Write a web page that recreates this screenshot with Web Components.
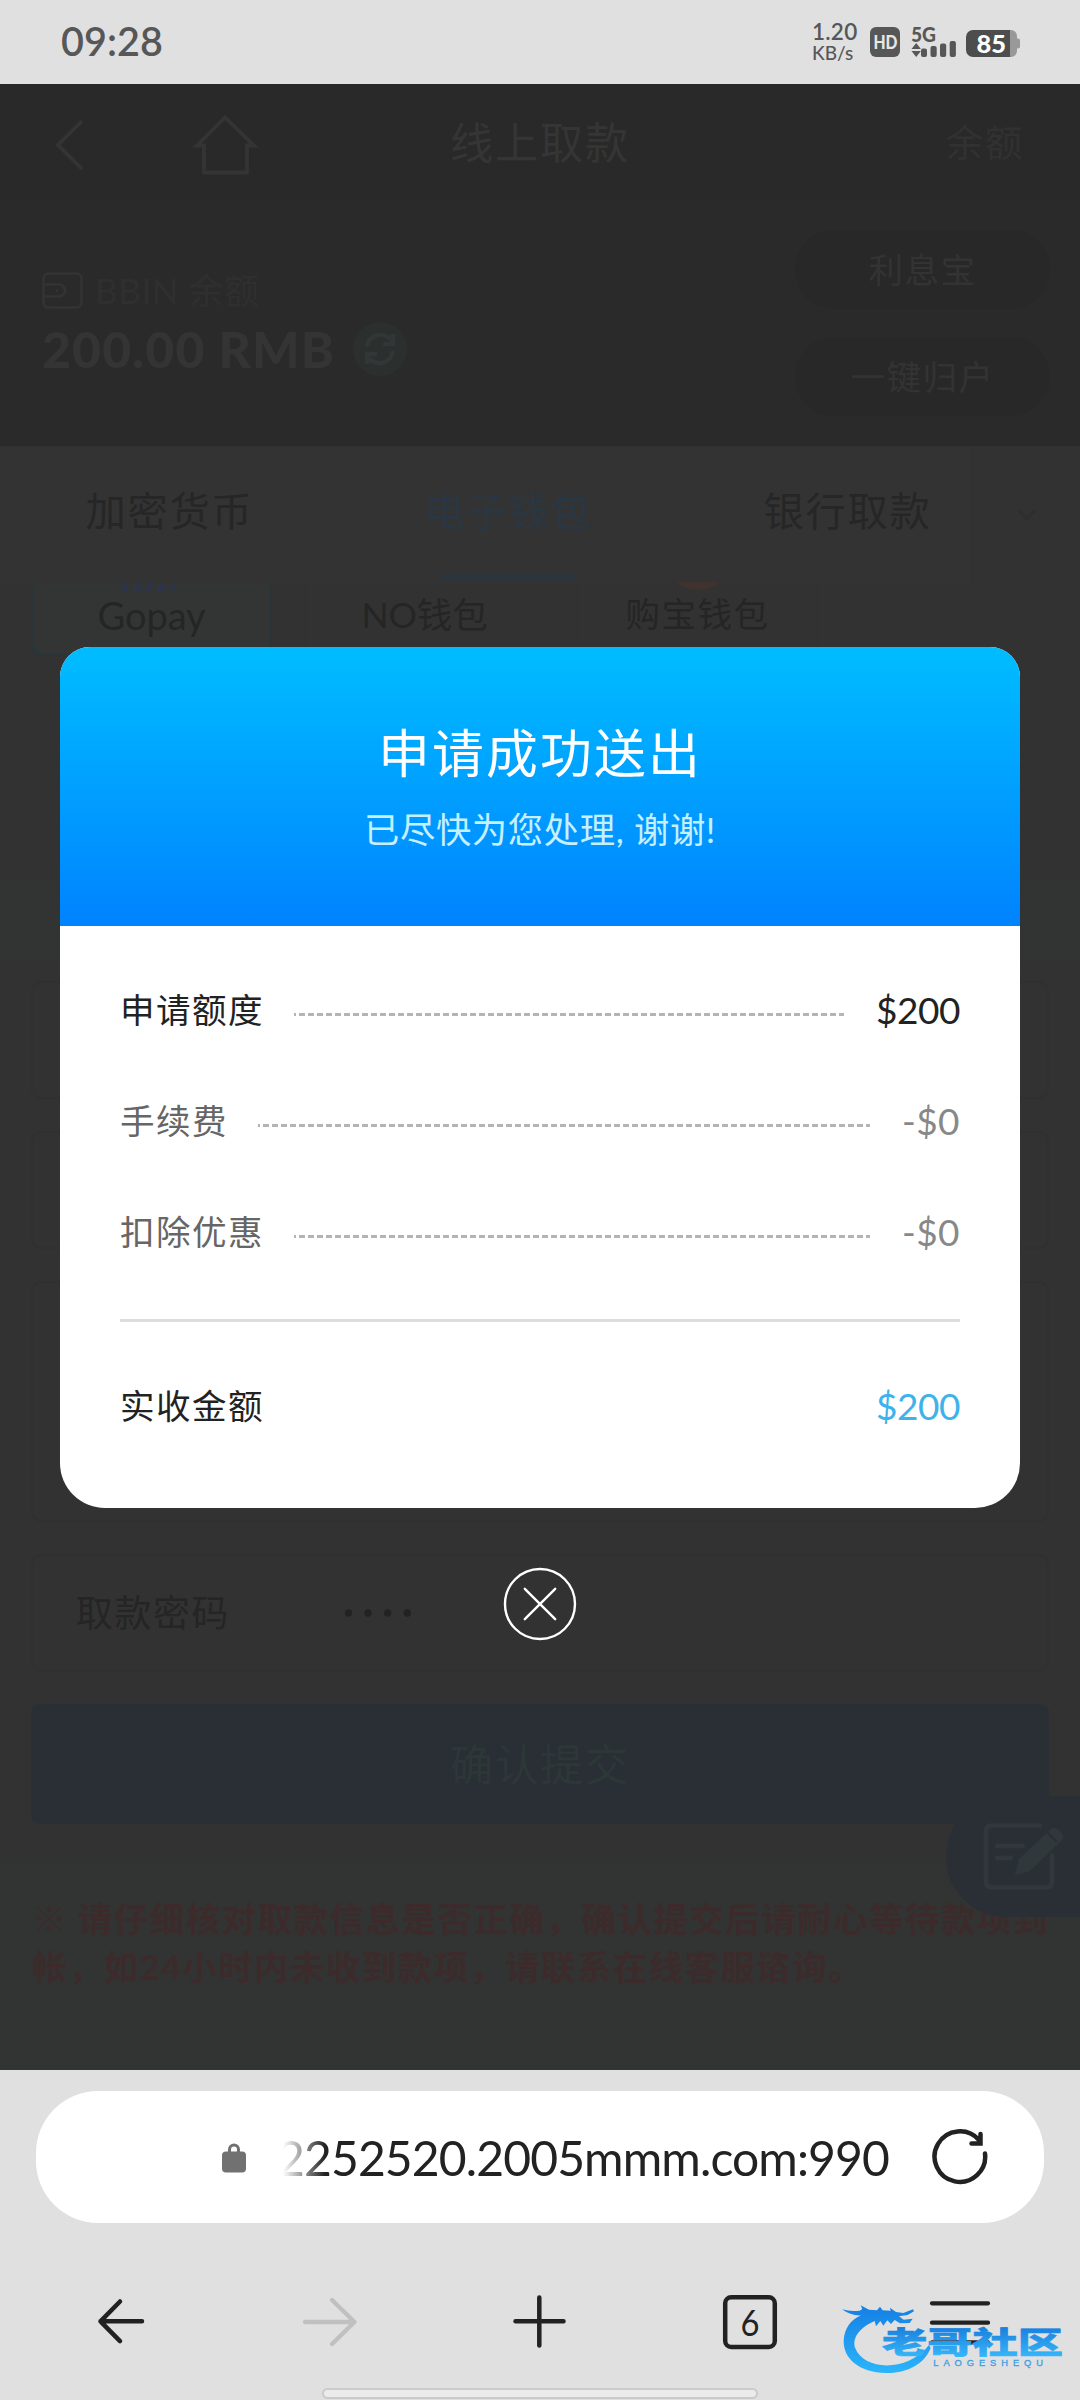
<!DOCTYPE html>
<html lang="zh-CN">
<head>
<meta charset="utf-8">
<title>线上取款</title>
<style>
html,body{margin:0;padding:0;background:#e0e0e0}
body{width:1080px;height:2400px;overflow:hidden;font-family:Lato,"Noto Sans CJK SC",sans-serif;line-height:1}
</style>
</head>
<body>
<phone-screen></phone-screen>
<script>
const define = (name, html, init) => customElements.define(name, class extends HTMLElement {
  constructor() { super(); this.attachShadow({mode: 'open'}).innerHTML = html; }
  connectedCallback() { if (init) init(this, this.shadowRoot); }
});

define('phone-screen', `
<style>
:host{display:flex;flex-direction:column;width:1080px;height:2400px;background:#e0e0e0}
.view{display:grid;height:1986px;flex:none;overflow:hidden}
.view>*{grid-area:1/1}
</style>
<status-bar></status-bar>
<div class="view"><withdraw-page></withdraw-page><result-overlay></result-overlay></div>
<browser-bar></browser-bar>
`);

define('status-bar', `
<style>
:host{display:flex;height:84px;flex:none;box-sizing:border-box;padding:0 60px 0 61px;justify-content:space-between;color:#575757;background:#e0e0e0}
.time{padding-top:21px}
.right{display:flex;align-items:flex-start}
.speed{display:flex;flex-direction:column;width:44px;padding-top:20px;margin-right:14px}
svg{display:block}
</style>
<div class="time"><ui-text size="39.5" w="102" weight="600">09:28</ui-text></div>
<div class="right">
  <div class="speed"><ui-text size="22.5" lh="23" w="45" weight="600">1.20</ui-text><ui-text size="19" w="44" lh="19" weight="500">KB/s</ui-text></div>
  <svg width="150" height="84" viewBox="870 0 150 84" font-family="Lato" font-weight="900">
    <rect x="870" y="27" width="30" height="30" rx="6" fill="#575757"/>
    <text x="873.4" y="49" font-size="18.5" textLength="24" lengthAdjust="spacingAndGlyphs" fill="#e6e6e6">HD</text>
    <text x="911" y="42" font-size="20" textLength="25" lengthAdjust="spacingAndGlyphs" fill="#575757">5G</text>
    <path d="M911.5 49l4.7-6 4.7 6zM911.5 51h9.400l-4.700 6z" fill="#575757"/>
    <g fill="#575757"><rect x="921" y="48.500" width="6" height="8.500" rx="2"/><rect x="930.500" y="46" width="6.200" height="11" rx="2"/><rect x="940" y="43.500" width="6.200" height="13.500" rx="2"/><rect x="949.700" y="41" width="6.200" height="16" rx="2"/></g>
    <path d="M1010 30h1a6 6 0 0 1 6 6v2.500h1q2 0 2 2v6q0 2-2 2h-1v2.500a6 6 0 0 1-6 6h-1z" fill="#999"/>
    <path d="M973 30h37v27h-37a7 7 0 0 1-7-7v-13a7 7 0 0 1 7-7z" fill="#4d4d4d"/>
    <text x="976.500" y="52.700" font-size="24.500" textLength="29.500" lengthAdjust="spacingAndGlyphs" fill="#fff">85</text>
  </svg>
</div>
`);

define('withdraw-page', `
<style>
:host{display:flex;flex-direction:column;height:1986px;background:#323232;position:relative;overflow:hidden}
svg{display:block;flex:none}
nav{display:grid;grid-template-columns:270px 540px 270px;height:116px;background:#292929;color:#353535}
nav>*{align-self:center}
.title{text-align:center}
.bal{text-align:right;padding-right:56px;box-sizing:border-box;color:#313131}
.balance{display:flex;justify-content:space-between;height:246px;background:#2a2a2a;border-bottom:1px solid #313131}
.left{padding:70px 0 0 42px}
.l1{display:flex;align-items:center;gap:12px;height:40px;color:#2f2f2f}
.l2{display:flex;align-items:center;gap:18px;height:54px;margin-top:12px;color:#343434}
.pills{display:flex;flex-direction:column;gap:28px;padding:30px 30px 0 0}
.pill{width:255px;height:79px;border-radius:40px;background:#282828;display:flex;align-items:center;justify-content:center;color:#333}
.tabs{display:flex;height:136px;flex:none;overflow:hidden;background:#333}
.tab{width:339px;flex:none;display:grid;grid-template-rows:127px 6px;justify-items:center;align-items:center;color:#262626}
.tab.on{color:#2a3742}.tab.on i{width:134px;height:6px;background:#2a353d}
.third{width:293px;overflow:visible}
.third ui-text{margin-left:46px}
.more{width:109px;flex:none;background:#323232;border-left:1px solid #303030;display:flex;align-items:center;justify-content:center}
.tiles{display:flex;gap:32px;padding:0 31px;height:292px;flex:none}
.tile{width:241px;height:73px;box-sizing:border-box;border:2px solid #313131;border-top:0;border-radius:0 0 10px 10px;display:flex;flex-direction:column;align-items:center;color:#252525}
.tile.on{border:3px solid #2a3539;border-top:0;background:#323533}
.logo{height:8px;display:flex;align-items:flex-end}
.logo ui-text{color:#2b3358}
.label{padding-top:5px}
.strip{height:90px;flex:none;background:linear-gradient(#323232,#313433 25px,#313433 60px,#323232)}
.form{display:flex;flex-direction:column;padding:16px 31px 0;gap:32px;height:890px;box-sizing:border-box}
.box{box-sizing:border-box;border:2px solid #303030;border-radius:10px;height:118px;flex:none;display:flex;align-items:center}
.big{height:241px}
.pw{height:118px;padding-left:43px;color:#252525}
.btn{height:120px;flex:none;border-radius:9px;background:#2a2e35;display:flex;align-items:center;justify-content:center;color:#2d3737}
.note{flex:1;background:linear-gradient(#323232,#313433 40px);padding:40px 0 0 32px;color:#3d2b2b}
.note div{height:48px;display:flex;align-items:center;white-space:pre}
.float{position:absolute;right:0;top:1712px;width:134px;height:121px;background:#2a2f36;border-radius:60px 0 0 60px}
</style>
<nav>
  <svg width="270" height="116" viewBox="0 84 270 116" fill="none" stroke="#343434" stroke-width="3.800"><path d="M82 121L58 145 82 169"/><path d="M197 145.500h7v27h43v-27h7L225 117.500z"/></svg>
  <div class="title"><ui-text size="45">线上取款</ui-text></div>
  <div class="bal"><ui-text size="39">余额</ui-text></div>
</nav>
<div class="balance">
  <div class="left">
    <div class="l1">
      <svg width="41" height="37" viewBox="0 0 41 37" fill="none" stroke="#333" stroke-width="2.700"><rect x="1.500" y="1.500" width="38" height="34" rx="5"/><path d="M1.500 12.500H17a6 6 0 0 1 0 12H1.500M14 18.500h2"/></svg>
      <ui-text size="36.5" w="165">BBIN 余额</ui-text>
    </div>
    <div class="l2"><ui-text size="50" w="293" weight="900">200.00 RMB</ui-text>
      <svg width="54" height="54" viewBox="0 0 54 54"><circle cx="27" cy="27" r="27" fill="#2b302f"/><g fill="none" stroke="#303736" stroke-width="4.500"><path d="M14 25a13.500 13.500 0 0 1 24-7M40 29a13.500 13.500 0 0 1-24 7"/><path d="M40 12v10H30M14 42V32h10"/></g></svg>
    </div>
  </div>
  <div class="pills"><div class="pill"><ui-text size="36">利息宝</ui-text></div><div class="pill"><ui-text size="36">一键归户</ui-text></div></div>
</div>
<div class="tabs">
  <div class="tab"><ui-text size="42">加密货币</ui-text></div>
  <div class="tab on"><ui-text size="42">电子钱包</ui-text><i></i></div>
  <div class="tab third"><ui-text size="42">银行取款</ui-text></div>
  <div class="more"><svg width="20" height="14" viewBox="0 0 22 14"><path d="M2 2l9 9 9-9" fill="none" stroke="#2e2e2e" stroke-width="3"/></svg></div>
</div>
<div class="tiles">
  <div class="tile on"><div class="logo"><ui-text size="10" w="60" lh="8" weight="900">GOPAY</ui-text></div><div class="label"><ui-text size="38" w="108">Gopay</ui-text></div></div>
  <div class="tile"><div class="logo"></div><div class="label"><ui-text size="37" w="126">NO钱包</ui-text></div></div>
  <div class="tile"><div class="logo"><svg width="44" height="9" viewBox="0 0 44 9"><path d="M0 0h44Q34 8 22 8T0 0z" fill="#40322c"/></svg></div><div class="label"><ui-text size="36">购宝钱包</ui-text></div></div>
</div>
<div class="strip"></div>
<div class="form">
  <div class="box"></div><div class="box"></div><div class="box big"></div>
  <div class="box pw"><ui-text size="38.500">取款密码</ui-text>
    <svg width="200" height="20" viewBox="0 0 200 20" fill="#222"><circle cx="118.500" cy="10" r="3.700"/><circle cx="138" cy="10" r="3.700"/><circle cx="157.700" cy="10" r="3.700"/><circle cx="177.300" cy="10" r="3.700"/></svg>
  </div>
  <div class="btn"><ui-text size="45">确认提交</ui-text></div>
</div>
<div class="note">
  <div><ui-text size="36" w="1017" weight="700">※ 请仔细核对取款信息是否正确，确认提交后请耐心等待款项到</ui-text></div>
  <div><ui-text size="36" w="832" weight="700">帐，如24小时内未收到款项，请联系在线客服谘询。</ui-text></div>
</div>
<div class="float"><svg width="134" height="121" viewBox="946 1796 134 121"><path d="M1040 1825.500H992q-6 0-6 6v50q0 6 6 6h54q6 0 6-6v-26M997 1846h26M997 1858h14" fill="none" stroke="#31383b" stroke-width="4.500" stroke-linecap="round"/><path d="M1015 1875l4-16 32-30q4-3 9 2t2 9l-32 31z" fill="#31383b"/><path d="M1047 1832l10 10" stroke="#2a2f36" stroke-width="2"/></svg></div>
`);

define('result-overlay', `
<style>
:host{display:flex;flex-direction:column;align-items:center;z-index:1;padding-top:563px;box-sizing:border-box}
.card{width:960px;height:861px;border-radius:30px 30px 45px 45px;overflow:hidden;background:#fff;display:flex;flex-direction:column}
header{height:279px;flex:none;box-sizing:border-box;padding-top:79px;display:flex;flex-direction:column;align-items:center;gap:32px;background:linear-gradient(#00bdff,#0083ff);color:#fff}
.sub{color:#c4f0ff}
.body{padding:28px 60px 0}
hr{border:0;height:3px;background:#ddd;margin:32px 0 28px}
.close{margin-top:59px;display:block}
</style>
<div class="card">
  <header><ui-text size="54">申请成功送出</ui-text><div class="sub"><ui-text size="36.8" w="352">已尽快为您处理, 谢谢!</ui-text></div></header>
  <div class="body">
    <fee-row amount="$200" w="84" style="color:#222;--v:#222">申请额度</fee-row>
    <fee-row amount="-$0" w="58" style="color:#666;--v:#888">手续费</fee-row>
    <fee-row amount="-$0" w="58" style="color:#666;--v:#888">扣除优惠</fee-row>
    <hr>
    <fee-row amount="$200" w="84" style="color:#222;--v:#3eb2eb;--line:hidden">实收金额</fee-row>
  </div>
</div>
<svg class="close" width="74" height="74" viewBox="0 0 74 74" fill="none" stroke="#fff" stroke-width="2.400"><circle cx="37" cy="37" r="35"/><path d="M21.800 21.800l30.400 30.400M52.200 21.800L21.800 52.200" stroke-linecap="round"/></svg>
`);

define('fee-row', `
<style>
:host{display:flex;height:111px;align-items:center}
.line{flex:1;height:3px;margin:9px 32px 0 30px;visibility:var(--line,visible);background:repeating-linear-gradient(90deg,#b4b4b4 0 6px,transparent 6px 9px) -4px 0/1200px 3px no-repeat}
.v{color:var(--v)}
</style>
<ui-text size="36"><slot></slot></ui-text><div class="line"></div><span class="v"></span>
`, (host, root) => {
  const t = document.createElement('ui-text');
  t.setAttribute('size', '37');
  t.setAttribute('w', host.getAttribute('w'));
  t.textContent = host.getAttribute('amount');
  root.querySelector('.v').replaceChildren(t);
});

define('browser-bar', `
<style>
:host{display:flex;flex-direction:column;height:330px;box-sizing:border-box;padding:21px 36px 0;position:relative;background:#e0e0e0;color:#222}
.addr{height:132px;flex:none;border-radius:62px;background:#fff;display:flex;align-items:center}
.lock{margin-left:186px}
.url{margin-left:30px;width:613px;height:60px;padding-top:2px;box-sizing:border-box;display:flex;justify-content:flex-end;align-items:center;-webkit-mask-image:linear-gradient(90deg,transparent 7px,#000 49px);mask-image:linear-gradient(90deg,transparent 7px,#000 49px)}
.reload{margin-left:41px}
.tools{display:flex;height:56px;margin-top:71px;padding-left:61px}
.tools>*{flex:none}
.fwd{margin-left:156px}.plus{margin-left:153px}.count{margin-left:154px}.menu{margin-left:151px}
.home{width:436px;height:11px;box-sizing:border-box;border:2px solid #cbcbcb;border-radius:6px;background:#ebebeb;margin:38px 0 0 286px}
svg{display:block}
.mark{position:absolute;left:820px;top:210px}
</style>
<div class="addr">
  <svg class="lock" width="24" height="31" viewBox="0 0 24 31"><path d="M7.500 13V7.500a4.500 4.500 0 0 1 9 0V13" fill="none" stroke="#717171" stroke-width="3"/><rect y="9.500" width="24" height="21" rx="4" fill="#717171"/></svg>
  <div class="url"><ui-text size="48" w="612">2252520.2005mmm.com:990</ui-text></div>
  <svg class="reload" width="60" height="60" viewBox="930 2127 60 60" fill="none" stroke="#222" stroke-width="4.500" stroke-linecap="round"><path d="M985 2153.500a25.300 25.300 0 1 1-6-13.500M980.500 2134v9.500H971.500"/></svg>
</div>
<div class="tools">
  <svg width="48" height="56" viewBox="97 2294 48 56" fill="none" stroke="#222" stroke-width="4.500" stroke-linecap="round" stroke-linejoin="round"><path d="M142 2321.300h-41.500M120 2301.500l-19.500 19.800 19.500 19.800"/></svg>
  <svg class="fwd" width="58" height="56" viewBox="301 2294 58 56" fill="none" stroke="#c0c0c0" stroke-width="4.300" stroke-linecap="round" stroke-linejoin="round"><path d="M305 2322h49.500M332 2300l22.500 22-22.500 22"/></svg>
  <svg class="plus" width="56" height="56" viewBox="512 2294 56 56" fill="none" stroke="#222" stroke-width="4.500" stroke-linecap="round"><path d="M515.500 2321.300h48M539.300 2297.500v48"/></svg>
  <svg class="count" width="56" height="56" viewBox="722 2294 56 56" fill="none" stroke="#222" stroke-width="4.500"><rect x="725.200" y="2297.300" width="49.600" height="49.600" rx="6"/><text x="750" y="2335.500" text-anchor="middle" font-family="Lato" font-size="37" textLength="19" lengthAdjust="spacingAndGlyphs" fill="#222" stroke="none">6</text></svg>
  <svg class="menu" width="62" height="56" viewBox="929 2294 62 56" fill="none" stroke="#222" stroke-width="4.300" stroke-linecap="round"><path d="M932 2303.300h56M932 2322.700h56M932 2342.300h56"/></svg>
</div>
<div class="home"></div>
<svg class="mark" width="260" height="110" viewBox="0 0 780 330">
  <defs><linearGradient id="g" gradientUnits="userSpaceOnUse" x1="0" y1="80" x2="0" y2="280"><stop offset="0" stop-color="#1580e4"/><stop offset="1" stop-color="#2bb5fb"/></linearGradient>
  <linearGradient id="t" gradientUnits="userSpaceOnUse" x1="0" y1="-76" x2="0" y2="8"><stop offset="0" stop-color="#1a80de"/><stop offset="1" stop-color="#35b4f8"/></linearGradient></defs>
  <path fill="url(#g)" d="M66 88Q92 96 119 92L127 87 122 76 147 89 171 91 180 80 188 91 212 92 210 83 228 96 250 99 279 88 282 94 263 105 237 109 251 119 278 116 269 129 240 130 224 120 213 132 202 121 190 137 181 123 168 139 164 123C112 145 96 180 106 205C132 273 264 277 327 195L332 204C314 252 260 281 198 279C116 277 70 235 71 182C73 145 93 118 124 106Q93 108 66 88z"/>
  <g transform="translate(186 219) scale(1.5 1)"><text x="0" y="0" font-family="Noto Sans CJK SC" font-weight="900" font-size="90" textLength="362" lengthAdjust="spacingAndGlyphs" fill="url(#t)" stroke="url(#t)" stroke-width="2">老哥社区</text></g>
  <text x="340" y="258" font-family="Liberation Sans" font-size="28" textLength="329" fill="#3d9fe8" stroke="#3d9fe8">LAOGESHEQU</text>
</svg>
`);

/* Text run on a one-em pitch; with "w" its tracking is set so the run fills that width. */
define('ui-text', `<style>:host{display:inline-block;white-space:pre}</style><slot></slot>`, (host) => {
  const s = host.style, size = parseFloat(host.getAttribute('size'));
  const w = host.getAttribute('w');
  s.fontWeight = host.getAttribute('weight') || '400';
  s.lineHeight = (host.getAttribute('lh') || size) + 'px';
  const cjk = /[\u3400-\u9fff]/.test(host.textContent) || !!host.querySelector('slot');
  s.fontSize = size * (cjk ? 0.96 : 1) + 'px';
  s.letterSpacing = cjk ? size * 0.04 + 'px' : '0px';
  if (w) {
    const extra = (parseFloat(w) - host.getBoundingClientRect().width) / [...host.textContent].length;
    s.letterSpacing = parseFloat(s.letterSpacing) + extra + 'px';
  }
});
</script>
</body>
</html>
